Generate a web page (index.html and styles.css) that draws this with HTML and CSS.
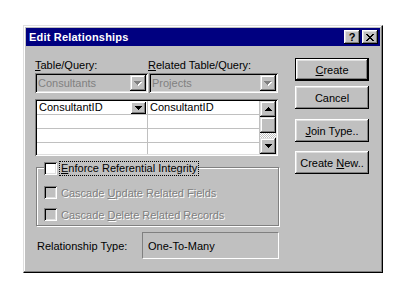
FILE: index.html
```html
<!DOCTYPE html>
<html>
<head>
<meta charset="utf-8">
<title>Edit Relationships</title>
<link rel="stylesheet" href="styles.css">
</head>
<body>
<div class="win">
  <div class="titlebar">
    <span class="title">Edit Relationships</span>
    <div class="tbtns">
      <div class="tbtn help">?</div>
      <div class="tbtn close">
        <svg width="8" height="7" viewBox="0 0 8 7" shape-rendering="crispEdges"><path d="M0 0h2v1H0zM6 0h2v1H6zM1 1h2v1H1zM5 1h2v1H5zM2 2h4v1H2zM3 3h2v1H3zM2 4h4v1H2zM1 5h2v1H1zM5 5h2v1H5zM0 6h2v1H0zM6 6h2v1H6z" fill="#000"/></svg>
      </div>
    </div>
  </div>
  <div class="content">
    <div class="left">
      <div class="labels">
        <span class="lab1"><u>T</u>able/Query:</span>
        <span class="lab2"><u>R</u>elated Table/Query:</span>
      </div>
      <div class="combos">
        <div class="combo c-left">
          <span class="ctext">Consultants</span>
          <div class="abtn">
            <svg width="8" height="5" viewBox="0 0 8 5" shape-rendering="crispEdges"><path d="M1 1h7v1H1zM2 2h5v1H2zM3 3h3v1H3zM4 4h1v1H4z" fill="#fff"/><path d="M0 0h7v1H0zM1 1h5v1H1zM2 2h3v1H2zM3 3h1v1H3z" fill="#808080"/></svg>
          </div>
        </div>
        <div class="combo c-right">
          <span class="ctext">Projects</span>
          <div class="abtn">
            <svg width="8" height="5" viewBox="0 0 8 5" shape-rendering="crispEdges"><path d="M1 1h7v1H1zM2 2h5v1H2zM3 3h3v1H3zM4 4h1v1H4z" fill="#fff"/><path d="M0 0h7v1H0zM1 1h5v1H1zM2 2h3v1H2zM3 3h1v1H3z" fill="#808080"/></svg>
          </div>
        </div>
      </div>
      <div class="grid">
        <div class="cells">
          <div class="row">
            <div class="cell col1"><span>ConsultantID</span>
              <div class="gbtn"><svg width="7" height="4" viewBox="0 0 7 4" shape-rendering="crispEdges"><path d="M0 0h7v1H0zM1 1h5v1H1zM2 2h3v1H2zM3 3h1v1H3z" fill="#000"/></svg></div>
            </div>
            <div class="cell col2">ConsultantID</div>
          </div>
          <div class="row"><div class="cell col1"></div><div class="cell col2"></div></div>
          <div class="row"><div class="cell col1"></div><div class="cell col2"></div></div>
          <div class="row last"><div class="cell col1"></div><div class="cell col2"></div></div>
        </div>
        <div class="vscroll">
          <div class="sbtn"><svg width="7" height="4" viewBox="0 0 7 4" shape-rendering="crispEdges"><path d="M3 0h1v1H3zM2 1h3v1H2zM1 2h5v1H1zM0 3h7v1H0z" fill="#000"/></svg></div>
          <div class="sbtn thumb"></div>
          <div class="track"></div>
          <div class="sbtn"><svg width="7" height="4" viewBox="0 0 7 4" shape-rendering="crispEdges"><path d="M0 0h7v1H0zM1 1h5v1H1zM2 2h3v1H2zM3 3h1v1H3z" fill="#000"/></svg></div>
        </div>
      </div>
      <div class="group">
        <div class="legend">
          <span class="check"></span>
          <span class="focus"><u>E</u>nforce Referential Integrity</span>
        </div>
        <div class="opt">
          <span class="check off"></span>
          <span class="dis">Cascade <u>U</u>pdate Related Fields</span>
        </div>
        <div class="opt">
          <span class="check off"></span>
          <span class="dis">Cascade <u>D</u>elete Related Records</span>
        </div>
      </div>
      <div class="reltype">
        <span class="rlabel">Relationship Type:</span>
        <div class="rbox">One-To-Many</div>
      </div>
    </div>
    <div class="right">
      <div class="btn default"><span><u>C</u>reate</span></div>
      <div class="btn cancel">Cancel</div>
      <div class="btn join"><span><u>J</u>oin Type..</span></div>
      <div class="btn cnew"><span>Create <u>N</u>ew..</span></div>
    </div>
  </div>
</div>
</body>
</html>
```

FILE: styles.css
```css
* { box-sizing: border-box; }

body {
  margin: 0;
  padding: 25px 0 0 23px;
  background: #fff;
  font-family: "Liberation Sans", Arial, sans-serif;
  font-size: 11px;
  color: #000;
}

u { text-decoration: underline; text-underline-offset: 1px; }

.win {
  width: 360px;
  height: 248px;
  background: #c0c0c0;
  border: 1px solid;
  border-color: #dfdfdf #000 #000 #dfdfdf;
  box-shadow: inset -1px -1px #808080, inset 1px 1px #fff;
  padding: 2px;
  display: flex;
  flex-direction: column;
}

.titlebar {
  height: 18px;
  background: #000080;
  display: flex;
  align-items: center;
  justify-content: space-between;
  padding: 0 2px 0 3px;
}

.title {
  color: #fff;
  font-weight: bold;
  font-size: 11px;
  letter-spacing: 0.2px;
}

.tbtns { display: flex; gap: 2px; }

.tbtn {
  width: 16px;
  height: 14px;
  background: #c0c0c0;
  box-shadow: inset -1px -1px #000, inset 1px 1px #fff, inset -2px -2px #808080, inset 2px 2px #dfdfdf;
  display: flex;
  align-items: center;
  justify-content: center;
  font-weight: bold;
  font-size: 11px;
  line-height: 1;
}

.content {
  flex: 1;
  display: flex;
  gap: 16px;
  padding: 0 11px 0 9px;
}

.left {
  width: 244px;
  display: flex;
  flex-direction: column;
}

.labels {
  display: flex;
  margin-top: 12px;
  height: 14px;
  line-height: 14px;
}

.lab1 { width: 113px; }

.combos {
  display: flex;
  gap: 1px;
  margin-top: 1px;
}

.combo {
  height: 20px;
  background: #c0c0c0;
  box-shadow: inset 1px 1px #808080, inset -1px -1px #fff, inset 2px 2px #000, inset -2px -2px #dfdfdf;
  display: flex;
  align-items: center;
  justify-content: space-between;
  padding: 2px;
}

.c-left { width: 113px; }
.c-right { width: 129px; }

.ctext {
  color: #808080;
  padding-left: 1px;
}

.abtn {
  width: 16px;
  height: 16px;
  box-shadow: inset -1px -1px #000, inset 1px 1px #dfdfdf, inset -2px -2px #808080, inset 2px 2px #fff;
  display: flex;
  align-items: center;
  justify-content: center;
  padding-top: 1px;
}

.grid {
  margin-top: 6px;
  width: 243px;
  height: 57px;
  background: #fff;
  box-shadow: inset 1px 1px #808080, inset -1px -1px #fff, inset 2px 2px #000, inset -2px -2px #dfdfdf;
  padding: 2px;
  display: flex;
}

.cells {
  flex: 1;
  display: flex;
  flex-direction: column;
  border-right: 1px solid #c0c0c0;
  overflow: hidden;
}

.row {
  display: flex;
  height: 14px;
  flex: none;
  border-bottom: 1px solid #c0c0c0;
}

.row.last { border-bottom: none; }

.cell {
  height: 13px;
  line-height: 13px;
  padding-left: 2px;
  display: flex;
  align-items: center;
}

.col1 {
  width: 111px;
  border-right: 1px solid #c0c0c0;
  justify-content: space-between;
  padding-right: 1px;
}

.col2 { flex: 1; }

.gbtn {
  width: 15px;
  height: 12px;
  background: #c0c0c0;
  box-shadow: inset -1px -1px #000, inset 1px 1px #fff, inset -2px -2px #808080;
  display: flex;
  align-items: center;
  justify-content: center;
}

.vscroll {
  width: 16px;
  display: flex;
  flex-direction: column;
}

.sbtn {
  width: 16px;
  height: 16px;
  flex: none;
  background: #c0c0c0;
  box-shadow: inset -1px -1px #000, inset 1px 1px #dfdfdf, inset -2px -2px #808080, inset 2px 2px #fff;
  display: flex;
  align-items: center;
  justify-content: center;
}

.track {
  flex: 1;
  background: repeating-conic-gradient(#c0c0c0 0 25%, #fff 0 50%) 0 0 / 2px 2px;
}

.group {
  margin-top: 11px;
  margin-left: 1px;
  width: 243px;
  height: 59px;
  border: 1px solid #808080;
  box-shadow: 1px 1px #fff, inset 1px 1px #fff;
  padding: 0 0 0 7px;
  display: flex;
  flex-direction: column;
}

.legend {
  display: flex;
  align-items: center;
  gap: 2px;
  margin-top: -7px;
  height: 15px;
  width: fit-content;
  background: #c0c0c0;
  padding-right: 1px;
}

.check {
  width: 13px;
  height: 13px;
  flex: none;
  background: #fff;
  box-shadow: inset 1px 1px #808080, inset -1px -1px #fff, inset 2px 2px #000, inset -2px -2px #dfdfdf;
}

.check.off { background: #c0c0c0; }

.focus {
  outline: 1px dotted #000;
  outline-offset: 0;
  padding: 0 1px;
  line-height: 13px;
  margin-left: 1px;
}

.opt {
  display: flex;
  align-items: center;
  gap: 4px;
  height: 13px;
  margin-top: 10px;
}

.opt + .opt { margin-top: 9px; }

.dis {
  color: #808080;
  text-shadow: 1px 1px 0 #fff;
}

.reltype {
  display: flex;
  align-items: center;
  margin-top: 6px;
  height: 27px;
}

.rlabel {
  width: 107px;
  padding-left: 2px;
}

.rbox {
  width: 137px;
  height: 27px;
  border: 1px solid;
  border-color: #808080 #fff #fff #808080;
  padding-left: 5px;
  display: flex;
  align-items: center;
}

.right {
  width: 74px;
  margin-top: 12px;
  display: flex;
  flex-direction: column;
}

.btn {
  height: 23px;
  background: #c0c0c0;
  box-shadow: inset -1px -1px #000, inset 1px 1px #fff, inset -2px -2px #808080, inset 2px 2px #dfdfdf;
  display: flex;
  align-items: center;
  justify-content: center;
}

.btn.default {
  box-shadow: inset 0 0 0 1px #000, inset -2px -2px #000, inset 2px 2px #fff, inset -3px -3px #808080, inset 3px 3px #dfdfdf;
}

.cancel { margin-top: 5px; }
.join { margin-top: 10px; }
.cnew { margin-top: 9px; }
```
